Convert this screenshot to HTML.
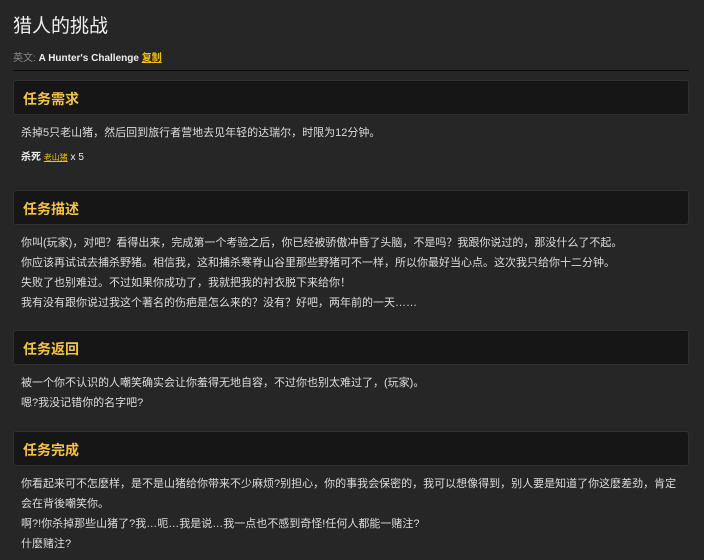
<!DOCTYPE html>
<html><head><meta charset="utf-8"><style>
body{margin:0;width:704px;height:560px;background:#262626;color:#ddd;font-family:"Liberation Sans","Noto Sans CJK SC",sans-serif;overflow:hidden;position:relative}
.a{position:absolute}
h1{position:absolute;left:13px;top:11px;margin:0;font-size:19px;font-weight:normal;color:#eee}
.sub{left:13px;top:49px;font-size:10px;color:#888}
.sub b{color:#eee}
.cp{color:#f5c000;text-decoration:underline;font-weight:bold}
.hr{left:13px;top:70px;width:676px;height:1px;background:#0a0a0a}
.hd{left:13px;width:674px;height:33px;background:#161616;border:1px solid #303030;border-radius:3px}
.hd span{position:absolute;left:9px;top:8px;font-size:14px;font-weight:bold;color:#f5c242}
.t{left:21px;width:665px;font-size:11px;line-height:20px;color:#ddd}
</style></head><body>
<h1>猎人的挑战</h1>
<div class="a sub">英文: <b>A Hunter's Challenge</b> <span class="cp">复制</span></div>
<div class="a hr"></div>
<div class="a hd" style="top:80px"><span>任务需求</span></div>
<div class="a t" style="top:123px">杀掉5只老山猪，然后回到旅行者营地去见年轻的达瑞尔，时限为12分钟。</div>
<div class="a t" style="top:148px;font-size:10px;color:#eee"><b>杀死</b> <span style="color:#f5c000;text-decoration:underline;font-size:8px">老山猪</span> x 5</div>
<div class="a hd" style="top:190px"><span>任务描述</span></div>
<div class="a t" style="top:233px">你叫(玩家)，对吧？看得出来，完成第一个考验之后，你已经被骄傲冲昏了头脑，不是吗？我跟你说过的，那没什么了不起。<br>你应该再试试去捕杀野猪。相信我，这和捕杀寒脊山谷里那些野猪可不一样，所以你最好当心点。这次我只给你十二分钟。<br>失败了也别难过。不过如果你成功了，我就把我的衬衣脱下来给你！<br>我有没有跟你说过我这个著名的伤疤是怎么来的？没有？好吧，两年前的一天……</div>
<div class="a hd" style="top:330px"><span>任务返回</span></div>
<div class="a t" style="top:373px">被一个你不认识的人嘲笑确实会让你羞得无地自容，不过你也别太难过了，(玩家)。<br>嗯?我没记错你的名字吧?</div>
<div class="a hd" style="top:431px"><span>任务完成</span></div>
<div class="a t" style="top:474px">你看起来可不怎麽样，是不是山猪给你带来不少麻烦?别担心，你的事我会保密的，我可以想像得到，别人要是知道了你这麽差劲，肯定会在背後嘲笑你。<br>啊?!你杀掉那些山猪了?我…呃…我是说…我一点也不感到奇怪!任何人都能一赌注?<br>什麽赌注?</div>
</body></html>
